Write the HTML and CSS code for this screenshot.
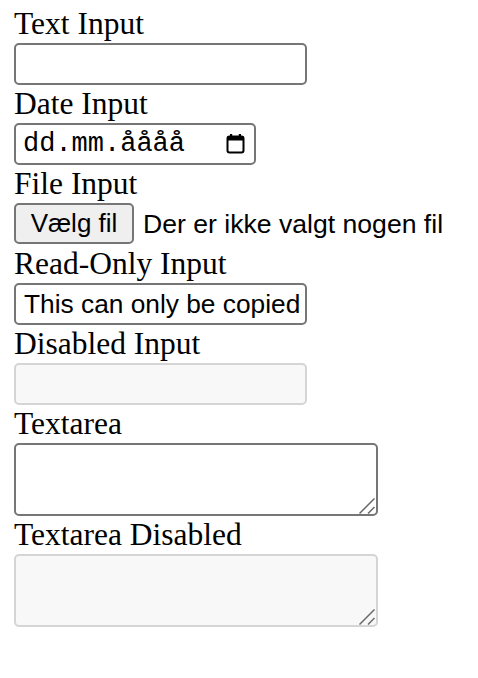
FILE: index.html
```html
<!DOCTYPE html>
<html lang="da">
<head>
<meta charset="utf-8">
<title>Form inputs</title>
<link rel="stylesheet" href="styles.css">
</head>
<body>
<form class="form">
  <div class="field">
    <label class="label" for="text-input">Text Input</label>
    <input id="text-input" class="input input--text" type="text">
  </div>
  <div class="field">
    <span class="label">Date Input</span>
    <div class="input input--date">
      <span class="date-text">dd.mm.åååå</span>
      <svg class="date-icon" width="19" height="21" viewBox="0 0 19 21" aria-hidden="true">
        <rect x="1.5" y="3.5" width="16" height="16" rx="2" fill="none" stroke="#000" stroke-width="2"/>
        <rect x="1.5" y="3.5" width="16" height="4" fill="#000"/>
        <rect x="4" y="1" width="2.2" height="3" fill="#000"/>
        <rect x="12.8" y="1" width="2.2" height="3" fill="#000"/>
      </svg>
    </div>
  </div>
  <div class="field">
    <span class="label">File Input</span>
    <div class="file">
      <span class="file-btn">Vælg fil</span>
      <span class="file-text">Der er ikke valgt nogen fil</span>
    </div>
  </div>
  <div class="field">
    <label class="label" for="ro-input">Read-Only Input</label>
    <input id="ro-input" class="input input--readonly" type="text" value="This can only be copied" readonly>
  </div>
  <div class="field">
    <label class="label" for="dis-input">Disabled Input</label>
    <input id="dis-input" class="input input--text input--disabled" type="text" disabled>
  </div>
  <div class="field">
    <label class="label" for="ta">Textarea</label>
    <div class="area">
      <textarea id="ta" class="area-box"></textarea>
      <svg class="grip" width="16" height="16" viewBox="0 0 16 16" aria-hidden="true">
        <path d="M0.5 15.5L15.5 0.5M9 15.5L15.5 9" stroke="#6a6a6a" stroke-width="1.5" fill="none"/>
      </svg>
    </div>
  </div>
  <div class="field">
    <label class="label" for="ta-dis">Textarea Disabled</label>
    <div class="area">
      <textarea id="ta-dis" class="area-box area-box--disabled" disabled></textarea>
      <svg class="grip" width="16" height="16" viewBox="0 0 16 16" aria-hidden="true">
        <path d="M0.5 15.5L15.5 0.5M9 15.5L15.5 9" stroke="#6a6a6a" stroke-width="1.5" fill="none"/>
      </svg>
    </div>
  </div>
</form>
</body>
</html>
```

FILE: styles.css
```css
html, body {
  background: #fff;
}

body {
  margin: 5px 14px;
  font-family: "Liberation Serif", "Times New Roman", serif;
  color: #000;
}

.form {
  display: flex;
  flex-direction: column;
  align-items: flex-start;
}

.field {
  display: flex;
  flex-direction: column;
  align-items: flex-start;
}

.label {
  display: block;
  font-size: 31.5px;
  line-height: 37px;
  height: 38px;
  white-space: nowrap;
}

.input {
  box-sizing: border-box;
  height: 42px;
  margin: 0;
  border: 2px solid #767676;
  border-radius: 5px;
  background: #fff;
  padding: 0 2px 0 8px;
  font-family: "Liberation Sans", Arial, sans-serif;
  font-size: 26.3px;
  color: #000;
  outline: none;
}

.input--text,
.input--readonly {
  width: 293px;
}

.input--date {
  width: 242px;
  display: flex;
  align-items: center;
  justify-content: space-between;
  padding: 0 9px 0 7px;
}

.date-text {
  font-family: "Liberation Mono", "Courier New", monospace;
  font-size: 27px;
  line-height: 1;
}

.date-icon {
  display: block;
  margin-top: -2px;
}

.input--disabled {
  border-color: #d5d5d5;
  background: #f8f8f8;
}

.file {
  display: flex;
  align-items: center;
  gap: 9px;
  height: 42px;
  font-family: "Liberation Sans", Arial, sans-serif;
  font-size: 26.6px;
}

.file-btn {
  box-sizing: border-box;
  display: flex;
  align-items: center;
  justify-content: center;
  width: 120px;
  height: 41px;
  margin-bottom: 1px;
  border: 2px solid #767676;
  border-radius: 5px;
  background: #efefef;
  font-size: 26px;
}

.file-text {
  white-space: nowrap;
}

.area {
  position: relative;
  width: 364px;
  height: 73px;
}

.area-box {
  display: block;
  box-sizing: border-box;
  width: 100%;
  height: 100%;
  margin: 0;
  border: 2px solid #767676;
  border-radius: 5px;
  background: #fff;
  resize: none;
  outline: none;
}

.area-box--disabled {
  border-color: #d5d5d5;
  background: #f8f8f8;
}

.grip {
  position: absolute;
  right: 3px;
  bottom: 2px;
}
```
